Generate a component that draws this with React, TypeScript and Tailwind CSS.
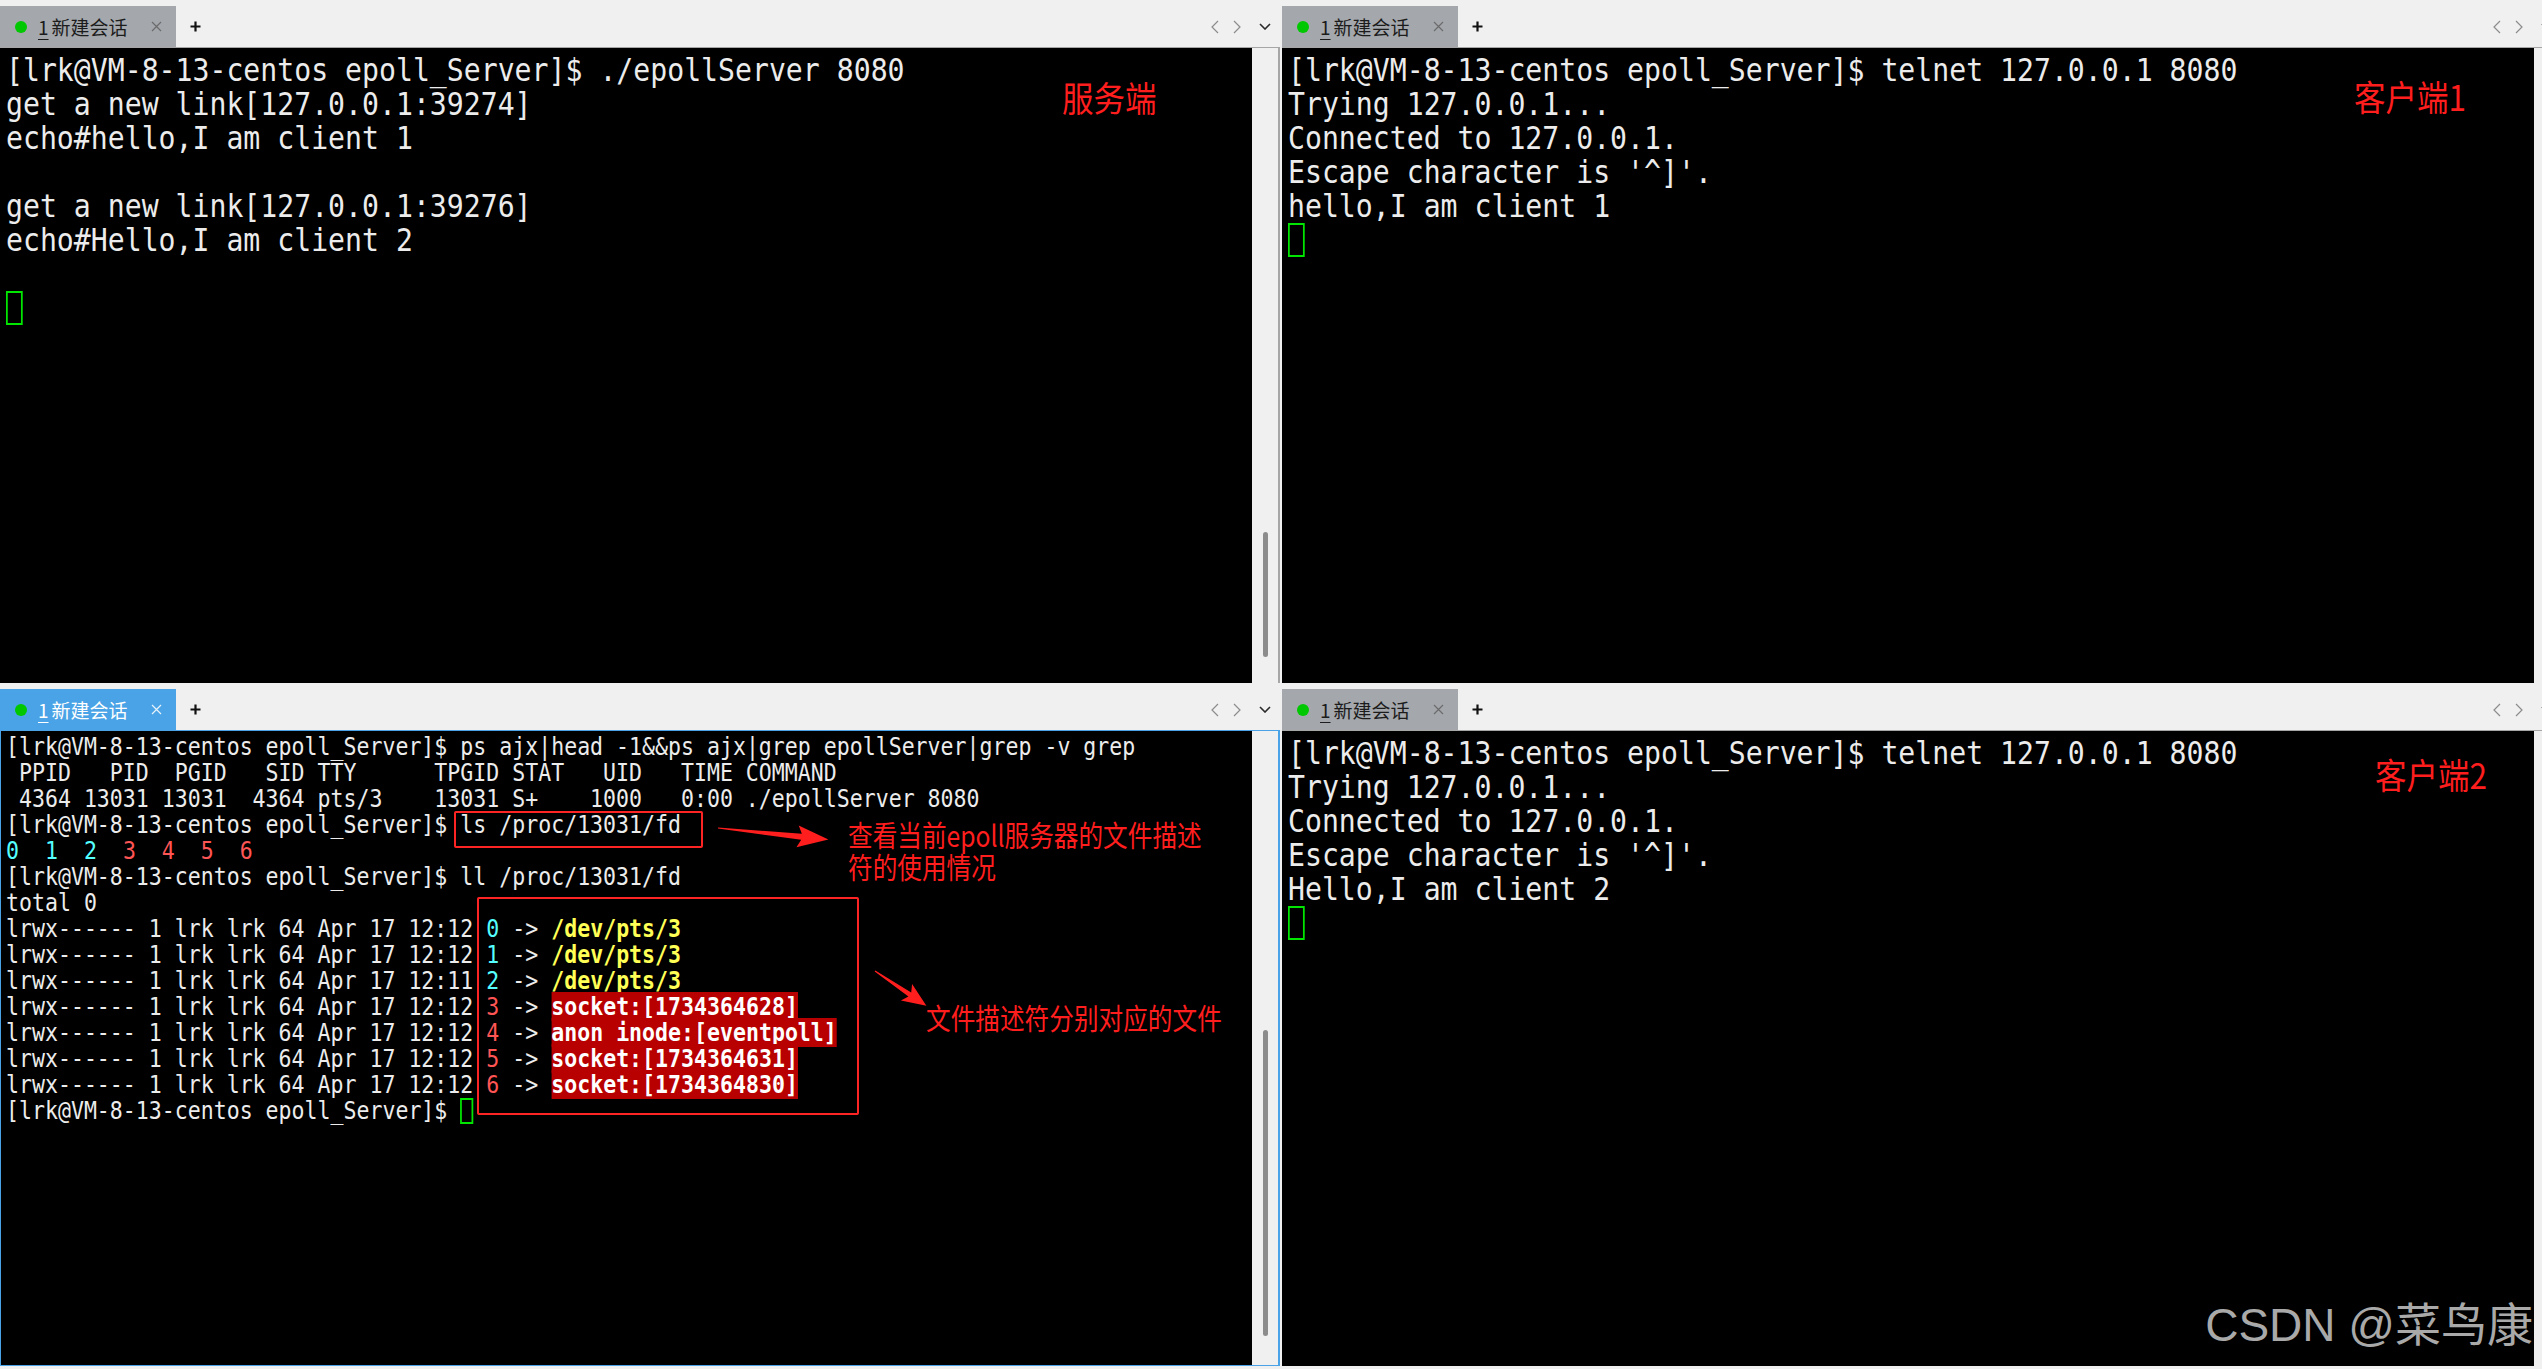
import type { ReactNode } from "react";

const PROMPT = "[lrk@VM-8-13-centos epoll_Server]$ ";

const fdRows = [
  { n: 0, time: "12:12", target: "/dev/pts/3" },
  { n: 1, time: "12:12", target: "/dev/pts/3" },
  { n: 2, time: "12:11", target: "/dev/pts/3" },
  { n: 3, time: "12:12", target: "socket:[1734364628]" },
  { n: 4, time: "12:12", target: "anon_inode:[eventpoll]" },
  { n: 5, time: "12:12", target: "socket:[1734364631]" },
  { n: 6, time: "12:12", target: "socket:[1734364830]" },
];

function TabBar({ active }: { active?: boolean }) {
  return (
    <div className="flex h-[47px] items-end bg-[#f0f0f0] font-['Noto_Sans_CJK_SC',sans-serif]">
      <div
        className={
          active
            ? "flex h-[41px] w-[176px] items-center bg-[#4aa3e6] text-white"
            : "flex h-[41px] w-[176px] items-center bg-[#a4a8ac] text-[#1c1c1c]"
        }
      >
        <span className="ml-[15px] h-[12px] w-[12px] rounded-full bg-[#00c800]" />
        <span className="ml-[11px] text-[19px] leading-none underline underline-offset-[4px]">1</span>
        <span className="ml-[3px] text-[19px] leading-none">新建会话</span>
        <svg className="ml-auto mr-[14px]" width="11" height="11" viewBox="0 0 11 11">
          <path d="M1 1L10 10M10 1L1 10" stroke={active ? "#e8f2fb" : "#6b6b6b"} strokeWidth="1.2" fill="none" />
        </svg>
      </div>
      <div className="flex h-[41px] items-center pl-[14px]">
        <svg width="11" height="11" viewBox="0 0 11 11">
          <path d="M5.5 0.5V10.5M0.5 5.5H10.5" stroke="#111" strokeWidth="2.2" fill="none" />
        </svg>
      </div>
      <div className="ml-auto mr-[9px] flex h-[41px] items-center">
        <svg width="8" height="14" viewBox="0 0 8 14">
          <polyline points="7,1 1,7 7,13" stroke="#8c8c8c" strokeWidth="1.2" fill="none" />
        </svg>
        <svg className="ml-[14px]" width="8" height="14" viewBox="0 0 8 14">
          <polyline points="1,1 7,7 1,13" stroke="#8c8c8c" strokeWidth="1.2" fill="none" />
        </svg>
        <svg className="ml-[18px]" width="12" height="7" viewBox="0 0 12 7">
          <polyline points="1,1 6,6 11,1" stroke="#2a2a2a" strokeWidth="1.6" fill="none" />
        </svg>
      </div>
    </div>
  );
}

function Pane({ active, thumb, children }: { active?: boolean; thumb?: ReactNode; children: ReactNode }) {
  return (
    <div className="flex flex-col">
      <TabBar active={active} />
      <div
        className={
          active
            ? "flex h-[636px] border border-r-2 border-[#4aa3e6]"
            : "flex h-[636px] border-t border-r-2 border-[#a6a6a6]"
        }
      >
        <div className="relative flex-1 overflow-hidden bg-black">{children}</div>
        <div className="flex w-[26px] flex-col items-center justify-end bg-[#f0f0f0]">{thumb}</div>
      </div>
    </div>
  );
}

function BigTerm({ lines, cursor }: { lines: string[]; cursor?: boolean }) {
  return (
    <div className="pl-[6px] pt-[5px]">
      <div className="origin-top-left scale-x-[0.88] whitespace-pre font-['DejaVu_Sans_Mono',monospace] text-[32px] leading-[34px] text-[#ececec]">
        {lines.map((l, i) => (
          <div key={i} className="h-[34px]">
            {l}
          </div>
        ))}
        {cursor && <div className="h-[34px] w-[19px] border-2 border-[#00e600]" />}
      </div>
    </div>
  );
}

function Label({ text, className }: { text: string; className: string }) {
  return (
    <div
      className={`absolute origin-top-left scale-x-[0.9] whitespace-nowrap font-['Noto_Sans_CJK_SC',sans-serif] text-[35px] leading-none text-[#ff1e1e] ${className}`}
    >
      {text}
    </div>
  );
}

// red note text drawn over the terminal
function Note({ text, className }: { text: string; className: string }) {
  return (
    <div
      className={`absolute origin-top-left scale-x-[0.85] whitespace-nowrap font-['Noto_Sans_CJK_SC',sans-serif] text-[29px] leading-none text-[#ff1e1e] ${className}`}
    >
      {text}
    </div>
  );
}

function FdTerm() {
  return (
    <>
      <div className="pl-[5px] pt-[3px]">
        <div className="origin-top-left scale-x-[0.88] whitespace-pre font-['DejaVu_Sans_Mono',monospace] text-[24.5px] leading-[26px] text-[#ececec]">
          <div>{PROMPT}ps ajx|head -1&amp;&amp;ps ajx|grep epollServer|grep -v grep</div>
          <div> PPID   PID  PGID   SID TTY      TPGID STAT   UID   TIME COMMAND</div>
          <div> 4364 13031 13031  4364 pts/3    13031 S+    1000   0:00 ./epollServer 8080</div>
          <div>{PROMPT}ls /proc/13031/fd</div>
          <div>
            <span className="text-[#55ffff]">0</span>  <span className="text-[#55ffff]">1</span>{"  "}
            <span className="text-[#55ffff]">2</span>  <span className="text-[#ff5555]">3</span>{"  "}
            <span className="text-[#ff5555]">4</span>  <span className="text-[#ff5555]">5</span>{"  "}
            <span className="text-[#ff5555]">6</span>
          </div>
          <div>{PROMPT}ll /proc/13031/fd</div>
          <div>total 0</div>
          {fdRows.map((r) => (
            <div key={r.n}>
              lrwx------ 1 lrk lrk 64 Apr 17 {r.time}{" "}
              <span className={r.n < 3 ? "text-[#55ffff]" : "text-[#ff5555]"}>{r.n}</span> -&gt;{" "}
              <span className={r.n < 3 ? "font-bold text-[#ffff55]" : "bg-[#b80000] font-bold text-white"}>{r.target}</span>
            </div>
          ))}
          <div>
            {PROMPT}
            <span className="inline-block h-[26px] w-[15px] border-2 border-[#00e600] align-top" />
          </div>
        </div>
      </div>

      {/* annotations */}
      <div className="absolute left-[453px] top-[80px] h-[37px] w-[249px] rounded-[2px] border-2 border-[#ff2424]" />
      <div className="absolute left-[476px] top-[166px] h-[218px] w-[382px] rounded-[2px] border-2 border-[#ff2424]" />
      <svg className="pointer-events-none absolute left-0 top-0" width="1251" height="634">
        <g transform="translate(717,97) rotate(6)">
          <polygon points="0,-0.5 84,-3 80,-11 111,0 80,11 84,3 0,0.5" fill="#ff1e1e" />
        </g>
        <g transform="translate(874,240) rotate(34)">
          <polygon points="0,-0.6 42,-2.5 38,-10 62,0 38,10 42,2.5 0,0.6" fill="#ff1e1e" />
        </g>
      </svg>
      <Note text="查看当前epoll服务器的文件描述" className="left-[847px] top-[89px]" />
      <Note text="符的使用情况" className="left-[847px] top-[121px]" />
      <Note text="文件描述符分别对应的文件" className="left-[925px] top-[272px]" />
    </>
  );
}

export default function App() {
  return (
    <div className="relative h-[1369px] w-[2542px] overflow-hidden bg-[#f0f0f0]">
      <div className="grid grid-cols-[1280px_1280px] grid-rows-[683px_686px] gap-x-[2px]">
        <Pane thumb={<div className="mb-[26px] h-[125px] w-[5px] rounded-full bg-[#8c8c8c]" />}>
          <BigTerm
            cursor
            lines={[
              PROMPT + "./epollServer 8080",
              "get a new link[127.0.0.1:39274]",
              "echo#hello,I am client 1",
              "",
              "get a new link[127.0.0.1:39276]",
              "echo#Hello,I am client 2",
              "",
            ]}
          />
          <Label text="服务端" className="left-[1062px] top-[31px]" />
        </Pane>
        <Pane>
          <BigTerm
            cursor
            lines={[
              PROMPT + "telnet 127.0.0.1 8080",
              "Trying 127.0.0.1...",
              "Connected to 127.0.0.1.",
              "Escape character is '^]'.",
              "hello,I am client 1",
            ]}
          />
          <Label text="客户端1" className="left-[1072px] top-[30px]" />
        </Pane>
        <Pane active thumb={<div className="mb-[29px] h-[306px] w-[5px] rounded-full bg-[#8c8c8c]" />}>
          <FdTerm />
        </Pane>
        <Pane>
          <BigTerm
            cursor
            lines={[
              PROMPT + "telnet 127.0.0.1 8080",
              "Trying 127.0.0.1...",
              "Connected to 127.0.0.1.",
              "Escape character is '^]'.",
              "Hello,I am client 2",
            ]}
          />
          <Label text="客户端2" className="left-[1093px] top-[25px]" />
        </Pane>
      </div>
      <div className="absolute right-[9px] top-[1302px] whitespace-nowrap font-['Liberation_Sans','Noto_Sans_CJK_SC',sans-serif] text-[46px] leading-none text-[#a9a9a9]">
        CSDN @菜鸟康
      </div>
    </div>
  );
}
